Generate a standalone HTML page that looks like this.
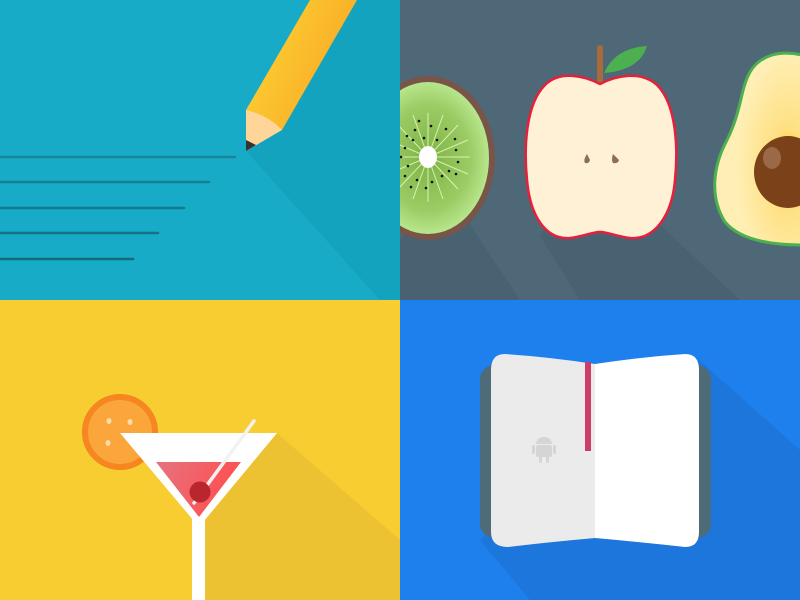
<!DOCTYPE html>
<html><head><meta charset="utf-8"><style>html,body{margin:0;padding:0;width:800px;height:600px;overflow:hidden}</style></head>
<body>
<svg width="800" height="600" viewBox="0 0 800 600" xmlns="http://www.w3.org/2000/svg">
<defs>
<linearGradient id="pen" x1="0" y1="0" x2="1" y2="0.5"><stop offset="0" stop-color="#fdd835"/><stop offset="1" stop-color="#f9a825"/></linearGradient>
<radialGradient id="kiwi" cx="0.5" cy="0.5" r="0.5"><stop offset="0" stop-color="#7cb342"/><stop offset="0.7" stop-color="#9ccc65"/><stop offset="1" stop-color="#b8e68c"/></radialGradient>
<radialGradient id="avo" cx="0.85" cy="0.6" r="0.6"><stop offset="0" stop-color="#ffc107"/><stop offset="0.35" stop-color="#ffe082"/><stop offset="1" stop-color="#ffefb5"/></radialGradient>
<linearGradient id="liq" x1="0" y1="0" x2="1" y2="0.3"><stop offset="0" stop-color="#e57380"/><stop offset="1" stop-color="#ff4f4f"/></linearGradient>
<clipPath id="q1"><rect x="0" y="0" width="400" height="300"/></clipPath>
<clipPath id="q2"><rect x="400" y="0" width="400" height="300"/></clipPath>
<clipPath id="q3"><rect x="0" y="300" width="400" height="300"/></clipPath>
<clipPath id="q4"><rect x="400" y="300" width="400" height="300"/></clipPath>
</defs>
<g clip-path="url(#q1)">
<rect x="0" y="0" width="400" height="300" fill="#17abc7"/>
<polygon points="246,151 310,0 400,0 400,300 380,300" fill="#139fba" opacity="0.7"/>
<g stroke-width="2.5" stroke-linecap="round">
<line x1="0" y1="157" x2="235" y2="157" stroke="#1a8599"/>
<line x1="0" y1="182" x2="209" y2="182" stroke="#17808f"/>
<line x1="0" y1="208" x2="184" y2="208" stroke="#157a8a"/>
<line x1="0" y1="233" x2="158" y2="233" stroke="#137383"/>
<line x1="0" y1="259" x2="133" y2="259" stroke="#106b7a"/>
</g>
<polygon points="246,110 282,130 357,0 310,0" fill="url(#pen)"/>
<path d="M246,110 Q268,115 282,130 L246,151Z" fill="#ffd59a"/>
<path d="M246,140 L256,145 L246,151Z" fill="#333"/>
</g>
<g clip-path="url(#q2)">
<rect x="400" y="0" width="400" height="300" fill="#4e6878"/>
<polygon points="480,110 495,158 470,225 520,300 400,300 400,240" fill="#48606f" opacity="0.8"/>
<polygon points="640,80 677,180 660,225 740,300 580,300 540,236" fill="#48606f" opacity="0.8"/>
<ellipse cx="428" cy="158" rx="67" ry="82" fill="#795548"/>
<ellipse cx="428" cy="158" rx="61" ry="76" fill="url(#kiwi)"/>
<g stroke="#e8f5c8" stroke-width="1" opacity="0.85">
<line x1="428" y1="113" x2="428" y2="202"/><line x1="385" y1="157" x2="470" y2="157"/>
<line x1="398" y1="125" x2="458" y2="189"/><line x1="458" y1="125" x2="398" y2="189"/>
<line x1="413" y1="115" x2="443" y2="199"/><line x1="443" y1="115" x2="413" y2="199"/>
<line x1="388" y1="140" x2="468" y2="174"/><line x1="468" y1="140" x2="388" y2="174"/>
</g>
<g fill="#111">
<circle cx="419" cy="121" r="1.3"/><circle cx="431" cy="126" r="1.3"/><circle cx="446" cy="129" r="1.3"/><circle cx="455" cy="139" r="1.3"/><circle cx="456" cy="150" r="1.3"/><circle cx="458" cy="162" r="1.3"/><circle cx="449" cy="171" r="1.3"/><circle cx="456" cy="174" r="1.3"/><circle cx="442" cy="176" r="1.3"/><circle cx="432" cy="182" r="1.3"/><circle cx="426" cy="188" r="1.3"/><circle cx="417" cy="180" r="1.3"/><circle cx="411" cy="187" r="1.3"/><circle cx="405" cy="176" r="1.3"/><circle cx="408" cy="166" r="1.3"/><circle cx="401" cy="157" r="1.3"/><circle cx="405" cy="148" r="1.3"/><circle cx="413" cy="140" r="1.3"/><circle cx="407" cy="136" r="1.3"/><circle cx="415" cy="130" r="1.3"/><circle cx="424" cy="138" r="1.3"/><circle cx="437" cy="140" r="1.3"/>
</g>
<ellipse cx="428" cy="157" rx="9" ry="11" fill="#fff"/>
<path d="M604,73 Q615,48 647,46 Q640,70 604,73Z" fill="#4caf50"/>
<rect x="597" y="45" width="6" height="42" rx="3" fill="#a86c3c"/>
<path d="M600,84 C585,76 560,70 545,85 C525,105 524,150 527,180 C530,215 545,240 570,238 C585,236 592,232 600,232 C608,232 615,236 630,238 C655,240 672,215 675,180 C678,150 677,105 657,85 C640,70 615,76 600,84Z" fill="#fff1d6" stroke="#e5203d" stroke-width="2.5"/>
<path d="M587,154 Q583,160 585,163 Q589,164 590,160Z" fill="#8d6e52"/>
<path d="M613,154 Q611,160 613,163 Q618,164 619,160Z" fill="#8d6e52"/>
<path d="M802,55 C780,50 760,55 750,72 C740,90 742,110 727,140 C712,168 710,198 725,222 C740,240 770,245 802,245Z" fill="url(#avo)" stroke="#4caf50" stroke-width="3"/>
<ellipse cx="788" cy="172" rx="34" ry="36" fill="#7b4219"/>
<ellipse cx="772" cy="158" rx="9" ry="11" fill="#9a6a48"/>
</g>
<g clip-path="url(#q3)">
<rect x="0" y="300" width="400" height="300" fill="#f8cd32"/>
<polygon points="277,433 400,540 400,600 205,600 205,520" fill="#ecc232"/>
<circle cx="120" cy="432" r="35" fill="#fba63b" stroke="#f6861f" stroke-width="6"/>
<g fill="#ffd9a8"><ellipse cx="109" cy="421" rx="2.5" ry="3"/><ellipse cx="130" cy="422" rx="2.5" ry="3"/><ellipse cx="108" cy="443" rx="2.5" ry="3"/></g>
<polygon points="120,433 277,433 199,527" fill="#fff"/>
<rect x="192" y="515" width="13" height="85" fill="#fff"/>
<polygon points="156,462 241,462 199,517" fill="url(#liq)"/>
<line x1="194" y1="503" x2="254" y2="421" stroke="#f2f2f2" stroke-width="3.5" stroke-linecap="round"/>
<circle cx="200" cy="492" r="10.5" fill="#b9262e"/>
</g>
<g clip-path="url(#q4)">
<rect x="400" y="300" width="400" height="300" fill="#1e80ec"/>
<polygon points="699,360 800,450 800,600 530,600 480,540" fill="#1c76dc"/>
<rect x="480" y="365" width="231" height="173" rx="14" fill="#4e6b78"/>
<path d="M505,354 Q550,357 595,364 L595,538 Q550,542 508,547 Q491,547 491,532 L491,370 Q491,354 505,354Z" fill="#ebebeb"/>
<path d="M595,364 Q640,357 685,354 Q699,354 699,370 L699,532 Q699,547 685,547 Q640,542 595,538Z" fill="#fff"/>
<rect x="585" y="362" width="6" height="89" fill="#cc3d6a"/>
<g fill="#d5d5d5">
<path d="M536,444 a8,7 0 0 1 16,0Z"/>
<rect x="536" y="445" width="16" height="12" rx="2"/>
<rect x="532" y="445" width="3" height="9" rx="1.5"/><rect x="553" y="445" width="3" height="9" rx="1.5"/>
<rect x="539" y="455" width="3" height="8" rx="1.5"/><rect x="546" y="455" width="3" height="8" rx="1.5"/>
</g>
</g>
</svg>
</body></html>
